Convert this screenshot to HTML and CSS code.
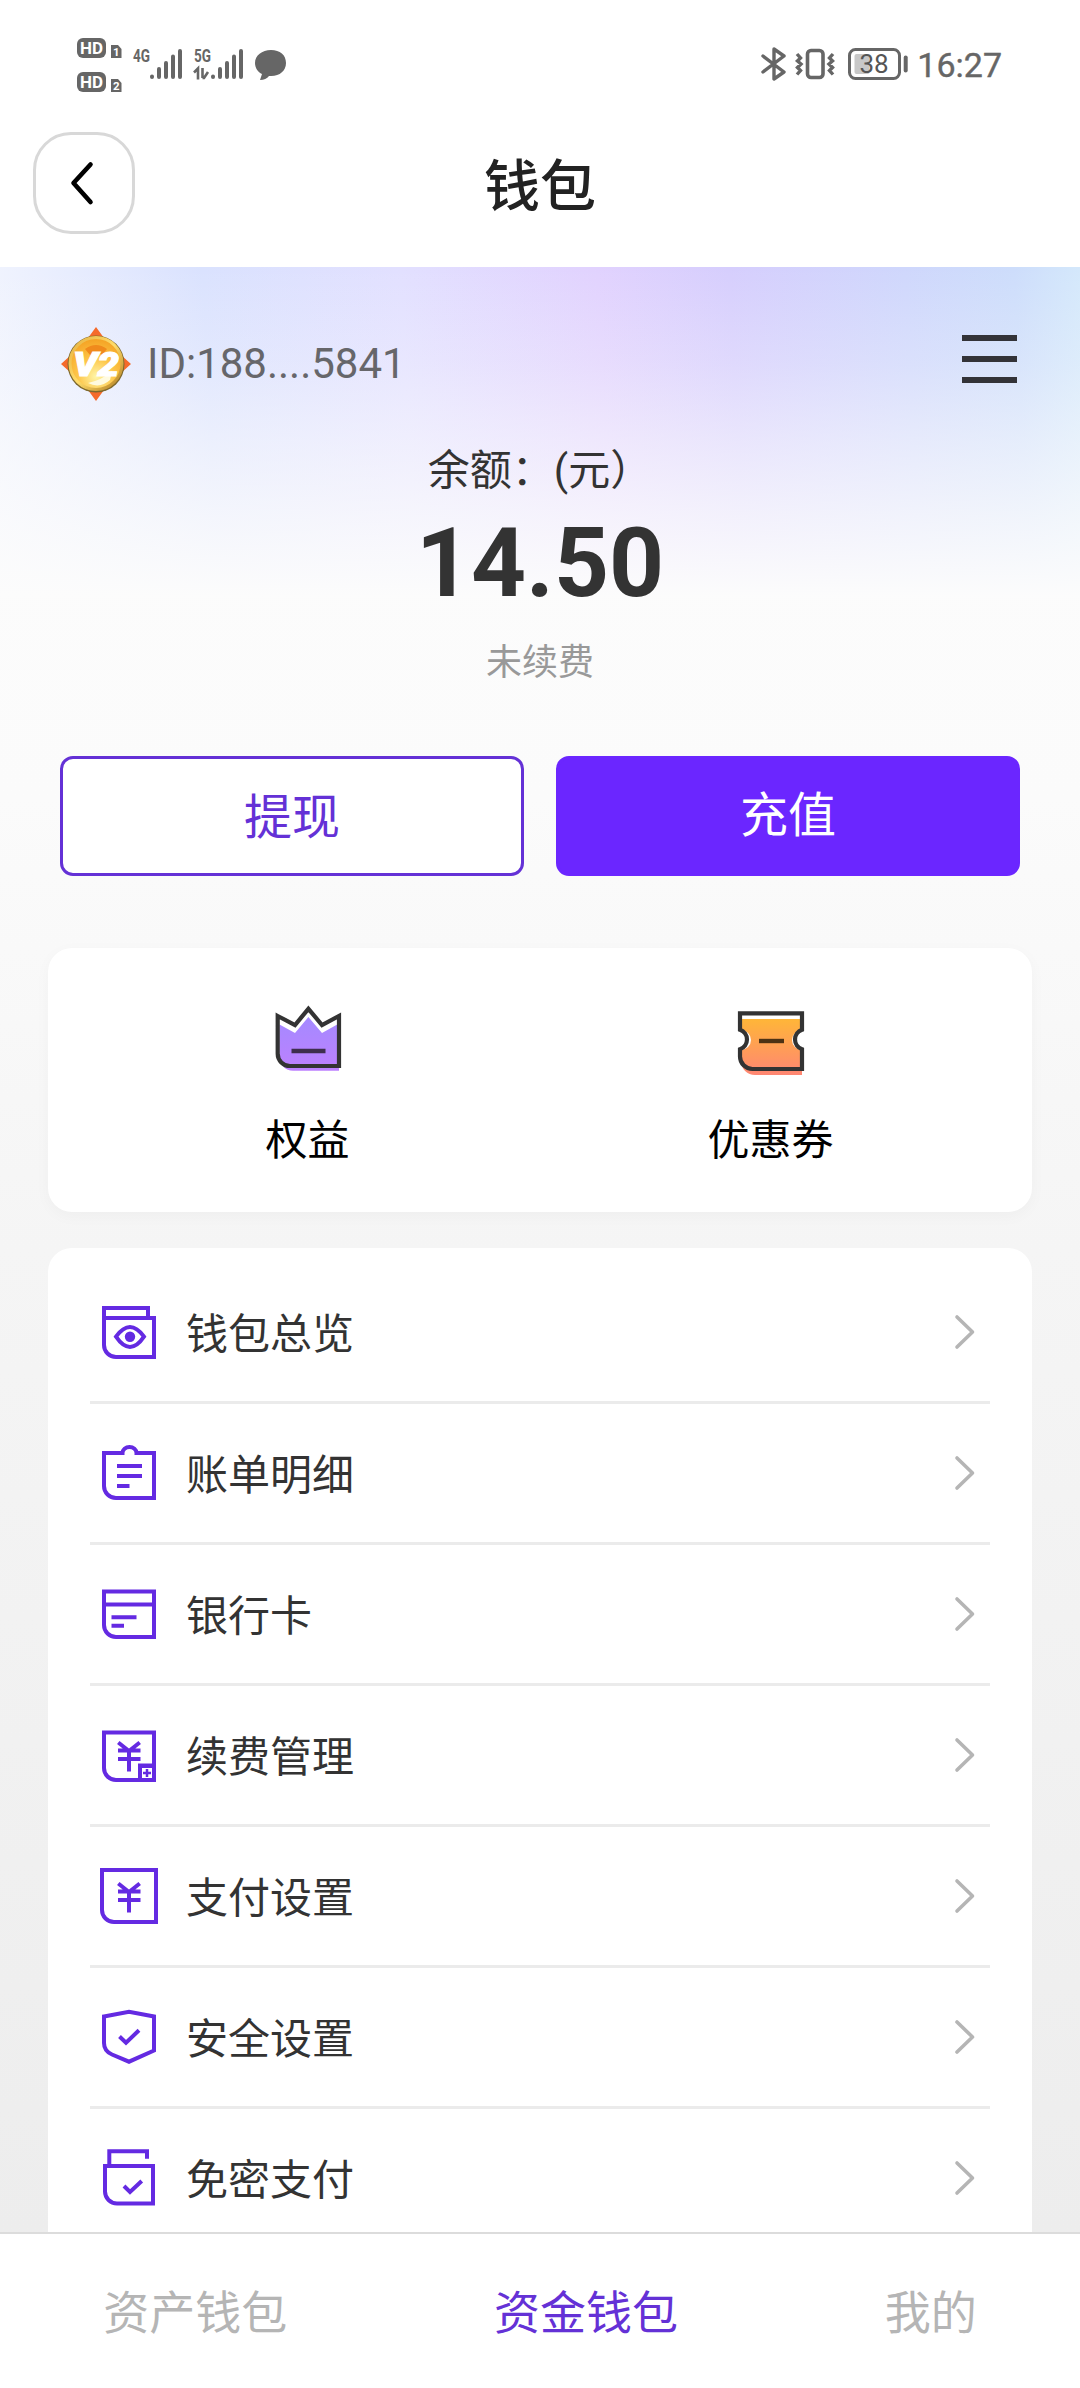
FILE: index.html
```html
<!DOCTYPE html>
<html lang="zh-CN">
<head>
<meta charset="utf-8">
<title>钱包</title>
<link rel="stylesheet" href="styles.css">
</head>
<body>
<div class="status-bar">
  <div class="status-left">
    <div class="hd-group">
      <svg width="46" height="20" viewBox="0 0 46 20"><rect width="29" height="20" rx="6" fill="#666"/><text x="14.5" y="16" text-anchor="middle" class="hd-text" textLength="23" lengthAdjust="spacingAndGlyphs">HD</text><path d="M34 7h7l3.500 4v9H34z" fill="#666"/><text x="39.200" y="18" text-anchor="middle" class="sim-text">1</text></svg>
      <svg width="46" height="20" viewBox="0 0 46 20"><rect width="29" height="20" rx="6" fill="#666"/><text x="14.5" y="16" text-anchor="middle" class="hd-text" textLength="23" lengthAdjust="spacingAndGlyphs">HD</text><path d="M34 7h7l3.500 4v9H34z" fill="#666"/><text x="39.200" y="18" text-anchor="middle" class="sim-text">2</text></svg>
    </div>
    <svg class="signal-one" width="52" height="34" viewBox="0 0 52 34"><text x="0" y="15" class="net-text" textLength="17" lengthAdjust="spacingAndGlyphs">4G</text><g stroke="#666" stroke-width="4" stroke-linecap="round"><path d="M19 30v-.5M26 30v-8M33 30V16M40 30V9.500M47 30V4"/></g></svg>
    <svg class="signal-two" width="52" height="34" viewBox="0 0 52 34"><text x="0" y="15" class="net-text" textLength="17" lengthAdjust="spacingAndGlyphs">5G</text><path d="M0 25.500l4-4v11M8.500 21v10M8.500 31h1.500l4-6" fill="none" stroke="#666" stroke-width="2.600"/><g stroke="#666" stroke-width="4" stroke-linecap="round"><path d="M19 30v-.5M26 30v-8M33 30V16M40 30V9.500M47 30V4"/></g></svg>
    <svg class="chat" width="34" height="32" viewBox="0 0 34 32"><path d="M17 1C8 1 1 6.500 1 14c0 5 3 9 7 11l-2 6c4 0 7-1.500 9-4 10 1 17-5 17-13S26 1 17 1z" fill="#666"/></svg>
  </div>
  <div class="status-right">
    <svg width="26" height="34" viewBox="0 0 26 34"><path d="M2 9l21 16-10 7V2l10 7L2 25" fill="none" stroke="#666" stroke-width="3.400" stroke-linejoin="round" stroke-linecap="round"/></svg>
    <svg class="vibrate" width="40" height="34" viewBox="0 0 40 34"><rect x="12.500" y="3.500" width="15.500" height="27" rx="3.500" fill="none" stroke="#666" stroke-width="3.600"/><path d="M2 7l3.500 4L2.500 14l3.500 3-3.500 3.500 3 3L2 27.500M38 7l-3.500 4 3 3-3.500 3 3.500 3.500-3 3 3.500 4" fill="none" stroke="#666" stroke-width="3.400"/></svg>
    <svg class="battery" width="60" height="34" viewBox="0 0 60 34"><rect x="1.500" y="2.500" width="50" height="29" rx="6" fill="none" stroke="#666" stroke-width="3"/><rect x="6.500" y="7" width="15" height="20" rx="2" fill="#c8c8c8"/><text x="26" y="26" text-anchor="middle" class="battery-text">38</text><path d="M57.700 10.500v13" stroke="#666" stroke-width="4" stroke-linecap="round"/></svg>
    <span class="clock">16:27</span>
  </div>
</div>
<header class="title-bar">
  <button class="back" aria-label="返回"><svg width="32" height="48" viewBox="0 0 32 48"><path d="M22.500 5.500L5.500 24l17 19" fill="none" stroke="#000" stroke-width="4.600" stroke-linecap="round" stroke-linejoin="round"/></svg></button>
  <h1>钱包</h1>
</header>
<main>
  <section class="wallet">
    <div class="user-row">
      <svg class="badge" width="72" height="74" viewBox="0 0 72 74">
        <defs>
          <radialGradient id="gold" cx=".5" cy=".75" r=".7"><stop offset="0" stop-color="#fff6a8"/><stop offset=".5" stop-color="#fdc64a"/><stop offset="1" stop-color="#f5a526"/></radialGradient>
          <linearGradient id="rim" x1="0" y1="0" x2="1" y2="1"><stop offset="0" stop-color="#e5b040"/><stop offset=".5" stop-color="#ffdc6a"/><stop offset="1" stop-color="#b07c20"/></linearGradient>
        </defs>
        <path d="M36 0l8 11H28zM36 74l8-11H28zM1 37l10-9v18zM71 37l-10-9v18z" fill="#f56a2a"/>
        <circle cx="36" cy="37" r="28.500" fill="#7d682c"/>
        <circle cx="36" cy="36.500" r="26" fill="url(#gold)" stroke="url(#rim)" stroke-width="3"/>
        <path d="M25 22q11-8 22 0l-5 6q-6-5-12 0z" fill="#f08a1c"/>
        <path d="M28 56q14-3 24-12l-2 9q-10 9-22 3z" fill="#fffbe0"/>
        <text x="36" y="49" text-anchor="middle" class="badge-text" textLength="46" lengthAdjust="spacingAndGlyphs">V2</text>
      </svg>
      <span class="user-id">ID:188....5841</span>
      <div class="menu"><i></i><i></i><i></i></div>
    </div>
    <div class="balance-label">余额：(元）</div>
    <div class="amount">14.50</div>
    <div class="renewal">未续费</div>
    <div class="actions">
      <button class="action withdraw">提现</button>
      <button class="action recharge">充值</button>
    </div>
  </section>
  <section class="card perks">
    <div class="perk">
      <svg width="72" height="80" viewBox="0 0 72 80">
        <defs><linearGradient id="violet" x1="0" y1="0" x2="0" y2="1"><stop offset="0" stop-color="#a48aff"/><stop offset="1" stop-color="#bd80ff"/></linearGradient></defs>
        <path d="M7.500 24.500L23 33l13.400-16L50 33l17-9.500v47.300H21A13.500 13.500 0 0 1 7.500 57z" fill="url(#violet)"/>
        <path d="M5.700 16L23 25 36.400 8.800 50 25l17-9v50H18A12.300 12.300 0 0 1 5.700 53.700z" fill="none" stroke="#333" stroke-width="4.200"/>
        <path d="M19.500 51h34" stroke="#3e2e4e" stroke-width="4.400"/>
      </svg>
      <span>权益</span>
    </div>
    <div class="perk">
      <svg width="72" height="80" viewBox="0 0 72 80">
        <defs><linearGradient id="orange" x1="0" y1="0" x2="0" y2="1"><stop offset="0" stop-color="#ffb638"/><stop offset="1" stop-color="#ff8673"/></linearGradient></defs>
        <path d="M6 19h61v11a10 10 0 0 0 0 20v25H20A14 14 0 0 1 6 61V50a10 10 0 0 0 0-20z" fill="url(#orange)"/>
        <path d="M5 13.300h62v16.500a10.300 10.300 0 0 0 0 19.500V69H17.500A12.500 12.500 0 0 1 5 56.500v-7.200a10.300 10.300 0 0 0 0-19.500z" fill="none" stroke="#333" stroke-width="4.200"/>
        <path d="M24 41h25" stroke="#4d3214" stroke-width="4.400"/>
      </svg>
      <span>优惠券</span>
    </div>
  </section>
  <ul class="card list">
    <li><svg class="icon" viewBox="0 0 60 60"><path d="M5 16V6h44v10M5 16h50v39H17A12 12 0 0 1 5 43z"/><path d="M17 34.700Q24 25 31 25t14 9.700Q38 45 31 45t-14-10.300z"/><circle class="solid" cx="31" cy="34.700" r="5.200"/></svg><span>钱包总览</span><svg class="chevron" viewBox="0 0 24 36"><path d="M3 3L18.500 18 3 33"/></svg></li>
    <li><svg class="icon" viewBox="0 0 60 60"><path d="M5 10h18.500a7 6 0 0 1 14 0H55v45H17A12 12 0 0 1 5 43z"/><path d="M18 23h25M18 33h25M18 43h12.500"/></svg><span>账单明细</span><svg class="chevron" viewBox="0 0 24 36"><path d="M3 3L18.500 18 3 33"/></svg></li>
    <li><svg class="icon" viewBox="0 0 60 60"><path d="M5 7.500h50v45.500H17A12 12 0 0 1 5 41zM5 20.500h50M12.500 33.300h25M12.500 41.800H25"/></svg><span>银行卡</span><svg class="chevron" viewBox="0 0 24 36"><path d="M3 3L18.500 18 3 33"/></svg></li>
    <li><svg class="icon" viewBox="0 0 60 60"><path d="M5 7.500h50V55H17A12 12 0 0 1 5 43z"/><path d="M19.300 17.500L30 26l10.700-8.500M19 25.500h22.500M19 34h22.500M30 25v21.500"/><path d="M39 38.500h18V57H39z" class="solid"/><path d="M43 43h10v10H43z" fill="#fff" stroke="none"/><path d="M48 44v8M44 48h8" stroke-width="2.500"/></svg><span>续费管理</span><svg class="chevron" viewBox="0 0 24 36"><path d="M3 3L18.500 18 3 33"/></svg></li>
    <li><svg class="icon" viewBox="0 0 60 60"><path d="M3 4h54v52H15A12 12 0 0 1 3 44z"/><path d="M19.300 17.500L30 26l10.700-8.500M19 25.500h22.500M19 34h22.500M30 25v21.500"/></svg><span>支付设置</span><svg class="chevron" viewBox="0 0 24 36"><path d="M3 3L18.500 18 3 33"/></svg></li>
    <li><svg class="icon" viewBox="0 0 60 60"><path d="M5 9.500L30 4.700l25 4.800v34L30 54.700 13 47.500Q5 44 5 36z"/><path d="M20.500 29.500l6.500 6.200 13-12.400"/></svg><span>安全设置</span><svg class="chevron" viewBox="0 0 24 36"><path d="M3 3L18.500 18 3 33"/></svg></li>
    <li><svg class="icon" viewBox="0 0 60 60"><path d="M10.300 18V3.300H48v7.500"/><path d="M6 18h48v37.500H18A12 12 0 0 1 6 43.500z"/><path d="M25 38l6 6 11.700-11"/></svg><span>免密支付</span><svg class="chevron" viewBox="0 0 24 36"><path d="M3 3L18.500 18 3 33"/></svg></li>
  </ul>
</main>
<nav>
  <a>资产钱包</a>
  <a class="active">资金钱包</a>
  <a>我的</a>
</nav>
</body>
</html>
```
FILE: styles.css
```css
* { box-sizing: border-box; }
body {
  margin: 0;
  width: 1080px;
  height: 2388px;
  overflow: hidden;
  display: flex;
  flex-direction: column;
  background: #fff;
  color: #333;
  font-family: Roboto, "Noto Sans CJK SC", sans-serif;
}
button { font: inherit; padding: 0; }
svg { display: block; flex: none; overflow: visible; }

.status-bar {
  height: 132px;
  flex: none;
  display: flex;
  justify-content: space-between;
  align-items: flex-start;
  padding: 38px 78px 0 77px;
  color: #666;
}
.status-left, .status-right { display: flex; align-items: flex-start; }
.hd-group { display: flex; flex-direction: column; gap: 14px; }
.hd-text { font: 700 17px Roboto, sans-serif; fill: #fff; }
.sim-text { font: 700 11.5px Roboto, sans-serif; fill: #fff; }
.net-text { font: 700 19px Roboto, sans-serif; fill: #666; }
.signal-one { margin: 9px 0 0 10px; }
.signal-two { margin: 9px 0 0 9px; }
.chat { margin: 11px 0 0 8px; }
.status-right > svg { margin-top: 9px; }
.status-right .vibrate { margin-left: 8px; }
.status-right .battery { margin-left: 13px; }
.battery-text { font: 400 26px Roboto, sans-serif; fill: #555; }
.clock { font-size: 34px; line-height: 40px; margin: 7px 0 0 9px; -webkit-text-stroke: .4px #666; }

.title-bar {
  height: 135px;
  flex: none;
  display: grid;
  grid-template-columns: 102px 1fr 102px;
  align-items: start;
  padding: 0 33px;
}
.back {
  width: 102px;
  height: 102px;
  border: 3px solid #d8d8d8;
  border-radius: 38px;
  background: #fff;
  display: flex;
  align-items: center;
  justify-content: center;
}
h1 {
  margin: 15px 0 0;
  font-size: 56px;
  line-height: 80px;
  font-weight: 500;
  text-align: center;
  color: #222;
}

main {
  flex: 1;
  min-height: 0;
  overflow: hidden;
  background:
    linear-gradient(180deg, rgba(252,252,252,0) 0, rgba(252,252,252,.24) 95px, rgba(252,252,252,.52) 175px, rgba(252,252,252,.76) 250px, rgba(252,252,252,.92) 305px, #fcfcfc 330px, rgba(252,252,252,0) 331px) 0 0 / 100% 331px no-repeat,
    linear-gradient(87deg, #f1f4fe 0, #dae2fe 20%, #e2e0ff 38%, #e1d2fe 56%, #d6cefd 68%, #cfd7fc 84%, #cdddfb 94%, #d4e8fb 100%) 0 0 / 100% 330px no-repeat,
    linear-gradient(180deg, #fdfdfd 0, #fbfbfb 27%, #f5f5f5 50%, #ededed 100%);
}
.user-row {
  display: flex;
  height: 74px;
  margin: 60px 63px 0 60px;
}
.badge-text { font: italic 900 34px Roboto, sans-serif; fill: #fff; stroke: #fff; stroke-width: 1.2px; }
.user-id { margin-left: 15px; padding-top: 12px; font-size: 42px; line-height: 50px; color: #66666a; }
.menu { margin: 8px 0 0 auto; width: 55px; display: flex; flex-direction: column; gap: 15px; }
.menu i { height: 6px; background: #333338; }
.balance-label { margin-top: 40px; font-size: 42px; line-height: 60px; text-align: center; }
.amount { margin-top: 6px; font-size: 96px; line-height: 112px; font-weight: 700; text-align: center; }
.renewal { margin-top: 19px; font-size: 36px; line-height: 50px; text-align: center; color: #999; }
.actions { display: grid; grid-template-columns: 1fr 1fr; gap: 32px; margin: 68px 60px 72px; }
.action { height: 120px; border-radius: 13px; font-size: 48px; line-height: 60px; border: 3px solid #6431d6; }
.withdraw { background: #fff; color: #6431d6; padding-top: 4px; }
.recharge { background: #6b26ff; border-color: #6b26ff; color: #fff; padding-bottom: 1px; }

.card { margin: 0 48px; background: #fff; border-radius: 24px; }
.perks {
  height: 264px;
  padding: 52px 30px 0 28px;
  display: grid;
  grid-template-columns: 1fr 1fr;
  box-shadow: 0 4px 16px rgba(0,0,0,.03);
}
.perk { display: flex; flex-direction: column; align-items: center; font-size: 42px; line-height: 60px; color: #000; }
.perk span { margin-top: 31px; }

.list { margin-top: 36px; padding: 15px 42px 0; list-style: none; height: 1200px; }
.list li {
  height: 141px;
  display: flex;
  align-items: center;
  padding: 0 12px 0 9px;
  border-bottom: 3px solid #ebebeb;
  font-size: 42px;
  line-height: 60px;
}
.list span { margin: 6px auto 0 27px; }
.icon { width: 60px; height: 60px; fill: none; stroke: #642ae2; stroke-width: 4; }
.icon .solid { fill: #642ae2; stroke: none; }
.chevron { width: 24px; height: 36px; fill: none; stroke: #b5b5b5; stroke-width: 3.6; stroke-linecap: round; stroke-linejoin: round; }

nav {
  height: 156px;
  flex: none;
  display: flex;
  justify-content: space-around;
  border-top: 2px solid #dcdcdc;
  background: #fff;
  font-size: 46px;
  line-height: 60px;
  padding-top: 49px;
  color: #b5b5b5;
}
.active { color: #6431d6; }
```
